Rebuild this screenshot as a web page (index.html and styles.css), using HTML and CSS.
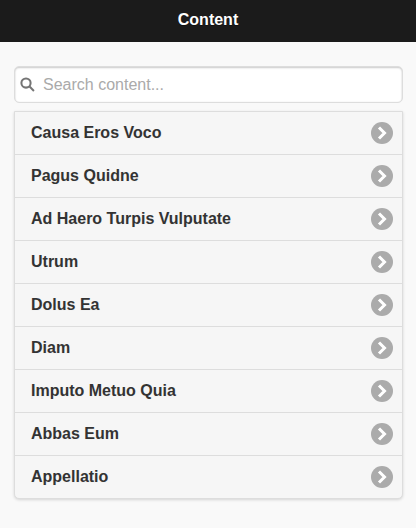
FILE: index.html
```html
<!DOCTYPE html>
<html lang="en">
<head>
<meta charset="utf-8">
<title>Content</title>
<link rel="stylesheet" href="styles.css">
</head>
<body>
<header class="header"><h1 class="title">Content</h1></header>
<main class="content">
  <form class="search">
    <svg class="search-icon" viewBox="0 0 14 14" aria-hidden="true"><circle cx="5.6" cy="5.6" r="4.3"/><path d="M8.7 8.7 L13 13"/></svg>
    <input class="search-input" type="text" placeholder="Search content...">
  </form>
  <ul class="list">
    <li class="row"><span>Causa Eros Voco</span><svg class="chev" viewBox="0 0 22 22"><circle cx="11" cy="11" r="11"/><path d="M8 5.5 L13.5 11 L8 16.5"/></svg></li>
    <li class="row"><span>Pagus Quidne</span><svg class="chev" viewBox="0 0 22 22"><circle cx="11" cy="11" r="11"/><path d="M8 5.5 L13.5 11 L8 16.5"/></svg></li>
    <li class="row"><span>Ad Haero Turpis Vulputate</span><svg class="chev" viewBox="0 0 22 22"><circle cx="11" cy="11" r="11"/><path d="M8 5.5 L13.5 11 L8 16.5"/></svg></li>
    <li class="row"><span>Utrum</span><svg class="chev" viewBox="0 0 22 22"><circle cx="11" cy="11" r="11"/><path d="M8 5.5 L13.5 11 L8 16.5"/></svg></li>
    <li class="row"><span>Dolus Ea</span><svg class="chev" viewBox="0 0 22 22"><circle cx="11" cy="11" r="11"/><path d="M8 5.5 L13.5 11 L8 16.5"/></svg></li>
    <li class="row"><span>Diam</span><svg class="chev" viewBox="0 0 22 22"><circle cx="11" cy="11" r="11"/><path d="M8 5.5 L13.5 11 L8 16.5"/></svg></li>
    <li class="row"><span>Imputo Metuo Quia</span><svg class="chev" viewBox="0 0 22 22"><circle cx="11" cy="11" r="11"/><path d="M8 5.5 L13.5 11 L8 16.5"/></svg></li>
    <li class="row"><span>Abbas Eum</span><svg class="chev" viewBox="0 0 22 22"><circle cx="11" cy="11" r="11"/><path d="M8 5.5 L13.5 11 L8 16.5"/></svg></li>
    <li class="row"><span>Appellatio</span><svg class="chev" viewBox="0 0 22 22"><circle cx="11" cy="11" r="11"/><path d="M8 5.5 L13.5 11 L8 16.5"/></svg></li>
  </ul>
</main>
</body>
</html>
```
FILE: styles.css
```css
* { box-sizing: border-box; }
html, body { margin: 0; height: 100%; overflow: hidden; }
body { background: #f9f9f9; font-family: "Liberation Sans", Arial, sans-serif; color: #333; }
.header { height: 42px; background: #1b1b1b; display: flex; align-items: center; justify-content: center; }
.title { margin: 0 0 2px; font-size: 16px; font-weight: 700; color: #fff; text-shadow: 0 1px 0 #111; }
.content { padding: 24px 13px 0 14px; display: flex; flex-direction: column; gap: 8px; }
.search { height: 37px; background: #fff; border: 1px solid #ddd; border-radius: 5px; box-shadow: inset 0 1px 2px rgba(0,0,0,.2), inset 0 0 1px rgba(0,0,0,.15); display: flex; align-items: center; padding-left: 5px; gap: 8px; }
.search-icon { width: 15px; height: 15px; fill: none; stroke: #757575; stroke-width: 1.9; flex: none; margin-bottom: 1px; }
.search-input { flex: 1; min-width: 0; border: 0; outline: 0; background: transparent; padding: 0; font: 16px "Liberation Sans", Arial, sans-serif; color: #333; }
.search-input::placeholder { color: #aaa; opacity: 1; }
.list { margin: 0; padding: 0; list-style: none; background: #f6f6f6; border: 1px solid #ddd; border-radius: 0 0 5px 5px; box-shadow: 0 1px 3px rgba(0,0,0,.15); }
.row { height: 43px; display: flex; align-items: center; justify-content: space-between; padding: 0 9px 0 16px; font-size: 16px; font-weight: 700; text-shadow: 0 1px 0 #f3f3f3; border-bottom: 1px solid #ddd; }
.row:last-child { border-bottom: 0; height: 42px; }
.chev { width: 22px; height: 22px; flex: none; }
.chev circle { fill: #ababab; }
.chev path { fill: none; stroke: #fff; stroke-width: 3; }
```
